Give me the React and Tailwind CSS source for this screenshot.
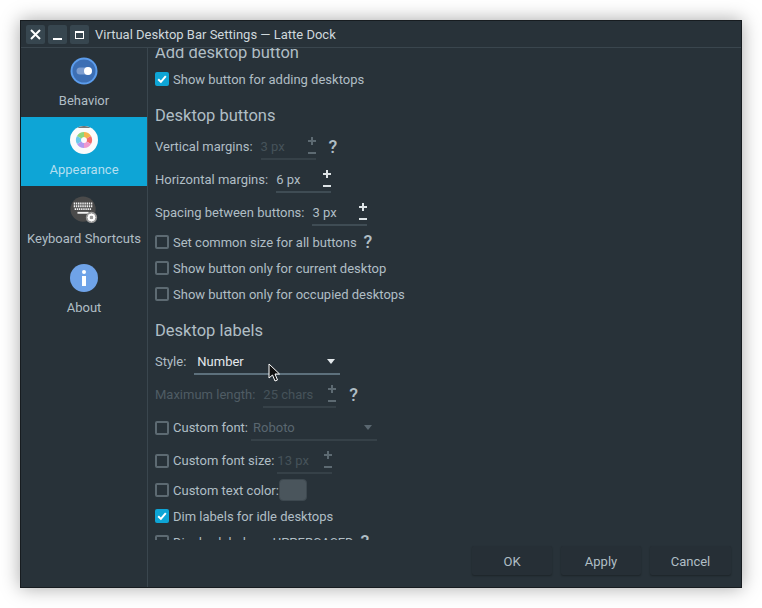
const sidebarItems = [
  { label: "Behavior", icon: <BehaviorIcon /> },
  { label: "Appearance", icon: <AppearanceIcon />, active: true },
  { label: "Keyboard Shortcuts", icon: <KeyboardIcon /> },
  { label: "About", icon: <AboutIcon /> },
];

function BehaviorIcon() {
  return (
    <svg width="28" height="28" viewBox="0 0 28 28">
      <circle cx="14" cy="14" r="13.5" fill="#5c9ded" />
      <circle cx="14" cy="14" r="11.5" fill="#3d6fb4" />
      <rect x="6.5" y="10.5" width="15" height="7" rx="3.5" fill="#7d9ed0" />
      <circle cx="18" cy="14" r="4" fill="#ffffff" />
    </svg>
  );
}

function AppearanceIcon() {
  return (
    <svg width="28" height="28" viewBox="0 0 28 28">
      <circle cx="14" cy="14" r="14" fill="#fbfbfb" />
      <path d="M8 1.4 A14 14 0 0 1 20 1.4 L20 2 L8 2 Z" fill="#777777" />
      <path d="M14 6 A8 8 0 0 1 21 10 L16.5 12.5 A3 3 0 0 0 14 11 Z" fill="#f5b44c" />
      <path d="M21 10 A8 8 0 0 1 21 18 L16.6 15.5 A3 3 0 0 0 16.6 12.5 Z" fill="#f26d6d" />
      <path d="M21 18 A8 8 0 0 1 14 22 L14 17 A3 3 0 0 0 16.6 15.5 Z" fill="#ef9ad0" />
      <path d="M14 22 A8 8 0 0 1 7 18 L11.4 15.5 A3 3 0 0 0 14 17 Z" fill="#b09af0" />
      <path d="M7 18 A8 8 0 0 1 7 10 L11.4 12.5 A3 3 0 0 0 11.4 15.5 Z" fill="#6cc9ec" />
      <path d="M7 10 A8 8 0 0 1 14 6 L14 11 A3 3 0 0 0 11.4 12.5 Z" fill="#8ed67c" />
    </svg>
  );
}

function KeyboardIcon() {
  return (
    <svg width="30" height="30" viewBox="0 0 30 30">
      <circle cx="14" cy="14" r="13.5" fill="#4a4a4a" />
      <path d="M4 8h20M4 11h20M5 14h18" stroke="#f2f2f2" strokeWidth="2" strokeDasharray="1.5 0.8" fill="none" />
      <rect x="8" y="17" width="12" height="2" fill="#f2f2f2" />
      <circle cx="23" cy="23" r="6" fill="#9a9a9a" />
      <circle cx="23" cy="23" r="3" fill="none" stroke="#ffffff" strokeWidth="2" />
      <path d="M23 18.8v2M23 25.2v2M18.8 23h2M25.2 23h2M20 20l1.4 1.4M24.6 24.6L26 26M26 20l-1.4 1.4M21.4 24.6L20 26" stroke="#ffffff" strokeWidth="1.2" />
    </svg>
  );
}

function AboutIcon() {
  return (
    <svg width="28" height="28" viewBox="0 0 28 28">
      <circle cx="14" cy="14" r="14" fill="#6fa3e8" />
      <circle cx="14" cy="8" r="2" fill="#ffffff" />
      <rect x="12" y="12" width="4" height="10" fill="#ffffff" />
    </svg>
  );
}

function Checkbox({ checked }) {
  if (checked) {
    return (
      <span className="flex h-[14px] w-[14px] shrink-0 items-center justify-center rounded-[2px] bg-[#0ea5d6]">
        <svg width="10" height="10" viewBox="0 0 10 10">
          <path d="M1.2 5.2 L3.9 7.9 L8.8 2.2" fill="none" stroke="#ffffff" strokeWidth="2" />
        </svg>
      </span>
    );
  }
  return <span className="h-[14px] w-[14px] shrink-0 rounded-[2px] border-2 border-[#5d6a72]" />;
}

function CheckRow({ label, checked, help }) {
  return (
    <div className="flex h-[26px] items-center">
      <Checkbox checked={checked} />
      <span className="ml-[4px] mt-[2px]">{label}</span>
      {help && <Help className="ml-[7px]" />}
    </div>
  );
}

function Heading({ children, className }) {
  return <h2 className={`flex h-[26px] items-center text-[16.5px] font-normal ${className}`}>{children}</h2>;
}

function Help({ className }) {
  return <span className={`text-[18px] leading-none font-medium text-[#b0bec5] ${className}`}>?</span>;
}

function SpinBox({ value, disabled, width }) {
  return (
    <div className={`relative h-[26px] border-b-2 ${width} ${disabled ? "border-[#364148]" : "border-[#3f4c54]"}`}>
      <span className={`absolute left-0 top-[3px] ${disabled ? "text-[#46525a]" : "text-[#b0bec5]"}`}>{value}</span>
      <span className={`absolute right-0 top-[2px] h-[10px] w-[8px] ${disabled ? "text-[#5d6a72]" : "text-[#dde3e6]"}`}>
        <span className="absolute left-0 top-[4px] h-[2px] w-[8px] bg-current" />
        <span className="absolute left-[3px] top-[1px] h-[8px] w-[2px] bg-current" />
      </span>
      <span className={`absolute right-0 top-[18px] h-[2px] w-[8px] ${disabled ? "bg-[#5d6a72]" : "bg-[#dde3e6]"}`} />
    </div>
  );
}

function SpinRow({ label, value, disabled, help, muted, check, width = "w-[55px]", gap = "ml-[8px]" }) {
  return (
    <div className="flex h-[33px] items-center">
      {check && <Checkbox />}
      <span className={`${check ? "ml-[4px]" : ""} ${muted ? "text-[#4f5c64]" : ""}`}>{label}</span>
      <div className={gap}>
        <SpinBox value={value} disabled={disabled} width={width} />
      </div>
      {help && <Help className="ml-[13px]" />}
    </div>
  );
}

function Combo({ value, width, disabled }) {
  return (
    <div className={`flex h-[26px] items-center justify-between border-b-2 pr-[5px] pt-[2px] ${width} ${disabled ? "border-[#364148] pl-[2px] text-[#5a6770]" : "border-[#5d707c] pl-[3px] text-[#e4e9ec]"}`}>
      <span>{value}</span>
      <span className={`h-0 w-0 border-x-[4px] border-t-[5px] border-x-transparent ${disabled ? "border-t-[#5a6770]" : "border-t-[#e4e9ec]"}`} />
    </div>
  );
}

function WindowButton({ children }) {
  return (
    <div className="mt-[1px] flex h-[19px] w-[19px] items-center justify-center rounded-[2px] bg-[#37464f]">{children}</div>
  );
}

function FooterButton({ label, width }) {
  return (
    <button className={`h-[29px] rounded-[2px] bg-[#262f36] pt-[2px] text-[#b0bec5] shadow-[0_1px_2px_rgba(0,0,0,0.3)] ${width}`}>
      {label}
    </button>
  );
}

export default function App() {
  return (
    <div className="h-[608px] w-[762px] overflow-hidden bg-white pl-[20px] pt-[20px] font-['Roboto',sans-serif] text-[13px] text-[#b0bec5]">
      <div className="relative flex h-[568px] w-[722px] flex-col border border-[#171c20] bg-[#283239] shadow-[0_0_18px_rgba(0,0,0,0.35)]">
        {/* title bar */}
        <div className="flex h-[27px] shrink-0 items-center gap-[3px] border-b border-[#3a464e] bg-[#283239] pl-[5px]">
          <WindowButton>
            <svg width="11" height="11" viewBox="0 0 11 11">
              <path d="M1 1 L10 10 M10 1 L1 10" stroke="#ffffff" strokeWidth="2" />
            </svg>
          </WindowButton>
          <WindowButton>
            <span className="mt-[8px] h-[2px] w-[9px] bg-white" />
          </WindowButton>
          <WindowButton>
            <span className="h-[8px] w-[9px] border border-t-2 border-white" />
          </WindowButton>
          <span className="ml-[3px] mt-[2px] text-[#cfd8dc]">Virtual Desktop Bar Settings — Latte Dock</span>
        </div>

        <div className="flex min-h-0 flex-1">
          {/* sidebar */}
          <div className="w-[127px] shrink-0 border-r border-[#3a464e]">
            {sidebarItems.map((item) => (
              <div
                key={item.label}
                className={`flex h-[69px] flex-col items-center pt-[9px] ${item.active ? "bg-[#0ea5d6] text-[#b3dff0]" : ""}`}
              >
                <div className="flex h-[28px] w-[28px] items-start justify-start">{item.icon}</div>
                <span className="mt-[8px] leading-[16px]">{item.label}</span>
              </div>
            ))}
          </div>

          {/* settings */}
          <div className="flex min-w-0 flex-1 flex-col">
            <div className="h-[492px] overflow-hidden pl-[7px]">
              <div className="mt-[-8px]">
                <Heading>Add desktop button</Heading>
                <CheckRow label="Show button for adding desktops" checked />

                <Heading className="mt-[10px] pt-[2px]">Desktop buttons</Heading>
                <div className="mt-[2px]">
                  <SpinRow label="Vertical margins:" value="3 px" disabled help />
                  <SpinRow label="Horizontal margins:" value="6 px" />
                  <SpinRow label="Spacing between buttons:" value="3 px" />
                </div>
                <CheckRow label="Set common size for all buttons" help />
                <CheckRow label="Show button only for current desktop" />
                <CheckRow label="Show button only for occupied desktops" />

                <Heading className="mt-[10px] pt-[2px]">Desktop labels</Heading>
                <div className="mt-[2px] flex h-[33px] items-center">
                  <span>Style:</span>
                  <div className="ml-[8px]">
                    <Combo value="Number" width="w-[146px]" />
                  </div>
                </div>
                <SpinRow label="Maximum length:" value="25 chars" disabled muted help width="w-[73px]" />
                <div className="flex h-[33px] items-center">
                  <Checkbox />
                  <span className="ml-[4px]">Custom font:</span>
                  <div className="ml-[3px]">
                    <Combo value="Roboto" width="w-[126px]" disabled />
                  </div>
                </div>
                <SpinRow label="Custom font size:" value="13 px" disabled check gap="ml-[3px]" />
                <div className="flex h-[26px] items-center">
                  <Checkbox />
                  <span className="ml-[4px] mt-[2px]">Custom text color:</span>
                  <span className="h-[22px] w-[28px] rounded-[4px] border border-[#3d484f] bg-[#4a555c]" />
                </div>
                <CheckRow label="Dim labels for idle desktops" checked />
                <CheckRow label="Display labels as UPPERCASED" help />
              </div>
            </div>

            {/* dialog buttons */}
            <div className="flex flex-1 items-start justify-end gap-[9px] pr-[10px] pt-[6px]">
              <FooterButton label="OK" width="w-[80px]" />
              <FooterButton label="Apply" width="w-[80px]" />
              <FooterButton label="Cancel" width="w-[81px]" />
            </div>
          </div>
        </div>

        {/* mouse cursor */}
        <svg className="absolute left-[247px] top-[342px]" width="13" height="20" viewBox="0 0 13 20">
          <path d="M1 1 L1 15 L4.5 12 L7 18 L9.5 17 L7 11 L11.5 11 Z" fill="#111111" stroke="#ffffff" strokeWidth="1" />
        </svg>
      </div>
    </div>
  );
}
